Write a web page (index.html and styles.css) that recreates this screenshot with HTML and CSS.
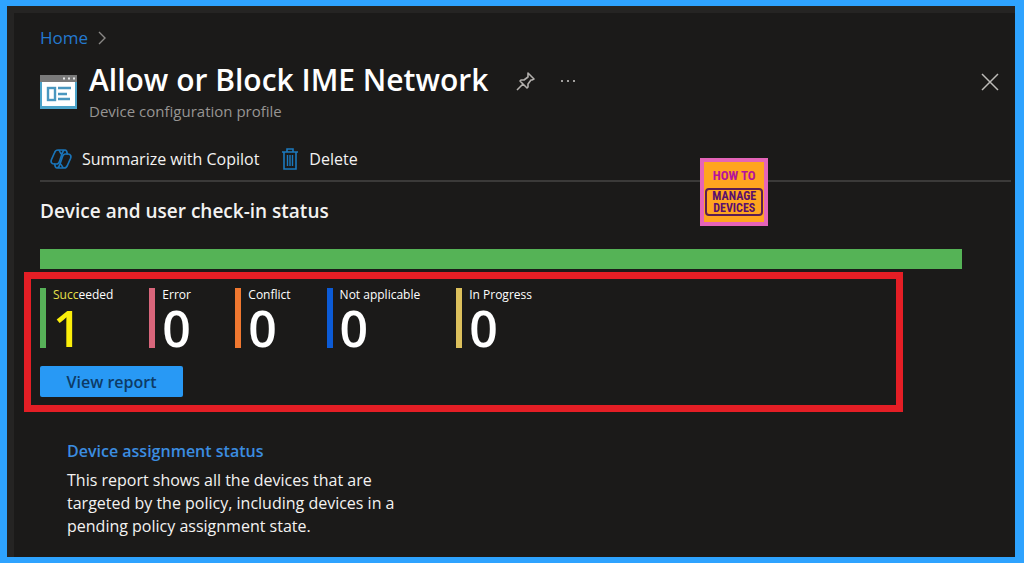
FILE: index.html
```html
<!DOCTYPE html>
<html lang="en">
<head>
  <meta charset="utf-8">
  <title>Allow or Block IME Network</title>
  <link rel="stylesheet" href="styles.css">
</head>
<body>
  <main class="blade">
    <nav class="breadcrumb">
      <a href="#">Home</a>
      <svg width="8" height="14" viewBox="0 0 8 14"><path d="M1 1l6 6-6 6" fill="none" stroke="#8a8886" stroke-width="1.4"/></svg>
    </nav>

    <header class="blade-header">
      <svg class="profile-icon" width="37" height="34" viewBox="0 0 37 34">
        <rect width="37" height="34" fill="#4ba3c9"/>
        <rect width="37" height="7" fill="#7a7a7a"/>
        <path d="M23 3.5h2M28 3.5h2M33 3.5h2" stroke="#e6e6e6" stroke-width="2"/>
        <rect x="2" y="7" width="33" height="24" fill="#fff"/>
        <rect x="8" y="13" width="7" height="12" fill="#fff" stroke="#4a97bf" stroke-width="2.4"/>
        <path d="M18 13h13M18 19h9M18 24h12" stroke="#4a97bf" stroke-width="2.4"/>
      </svg>
      <div class="title-block">
        <h1>Allow or Block IME Network</h1>
        <p>Device configuration profile</p>
      </div>
      <button class="icon-btn" type="button" aria-label="Pin">
        <svg width="20" height="20" viewBox="0 0 20 20" fill="none" stroke="#b3b0ad" stroke-width="1.6" stroke-linejoin="round"><path d="M12 2l6 6-2 1-1 0-3 4 0 3-1 1-7-7 1-1 3 0 4-3 0-2zM7 13l-6 6"/></svg>
      </button>
      <button class="icon-btn more" type="button" aria-label="More">
        <svg width="16" height="4" viewBox="0 0 16 4" fill="#a19f9d"><rect x="1" y="1" width="2" height="2"/><rect x="7" y="1" width="2" height="2"/><rect x="13" y="1" width="2" height="2"/></svg>
      </button>
      <button class="icon-btn close" type="button" aria-label="Close">
        <svg width="18" height="18" viewBox="0 0 18 18"><path d="M1 1l16 16M17 1L1 17" stroke="#bdbbb8" stroke-width="1.5"/></svg>
      </button>
    </header>

    <div class="toolbar">
      <button type="button">
        <svg width="22" height="20" viewBox="0 0 22 20" fill="none" stroke="#1a74b8" stroke-width="1.7" stroke-linecap="round" stroke-linejoin="round">
          <path d="M14 1H8C6 1 5 2 4.400 4L1.500 10.500C.5 13 1.500 15 4 15H6.500C8 15 9 14 9.500 12.500L12 5C12.500 3.500 13 1 15 1s2 2 2.300 4M8 1c2.500 0 1.500 4 4 4"/>
          <path d="M14 1H8C6 1 5 2 4.400 4L1.500 10.500C.5 13 1.500 15 4 15H6.500C8 15 9 14 9.500 12.500L12 5C12.500 3.500 13 1 15 1s2 2 2.300 4M8 1c2.500 0 1.500 4 4 4" transform="rotate(180 11 10)"/>
        </svg>
        Summarize with Copilot
      </button>
      <button type="button">
        <svg width="18" height="22" viewBox="0 0 18 22" fill="none" stroke="#1c79bd" stroke-width="1.6"><path d="M1 4h16M6 4V1h6v3M3 4v17h12V4"/><path d="M6.500 7v11M9 7v11M11.500 7v11" stroke-width="1.4"/></svg>
        Delete
      </button>
      <div class="logo"><span class="logo-top">HOW TO</span><span class="logo-box">MANAGE<br>DEVICES</span></div>
    </div>

    <h2>Device and user check-in status</h2>
    <div class="status-bar"></div>

    <section class="summary">
      <dl class="counts">
        <div class="count succeeded"><dt><span>Succ</span>eeded</dt><dd>1</dd></div>
        <div class="count error"><dt>Error</dt><dd>0</dd></div>
        <div class="count conflict"><dt>Conflict</dt><dd>0</dd></div>
        <div class="count not-applicable"><dt>Not applicable</dt><dd>0</dd></div>
        <div class="count in-progress"><dt>In Progress</dt><dd>0</dd></div>
      </dl>
      <button class="report-btn" type="button">View report</button>
    </section>

    <section class="report-card">
      <a href="#">Device assignment status</a>
      <p>This report shows all the devices that are targeted by the policy, including devices in a pending policy assignment state.</p>
    </section>
  </main>
</body>
</html>
```
FILE: styles.css
```css
* {
  box-sizing: border-box;
}

body {
  margin: 0;
  min-height: 100vh;
  display: flex;
  background: #2ea3ff;
  padding: 6px 9px 6px 7px;
  font-family: "Open Sans", "Noto Sans", sans-serif;
  font-size: 16px;
  color: #f3f2f1;
}

h1, h2, p, dl, dd {
  margin: 0;
}

a {
  text-decoration: none;
}

button {
  font: inherit;
  color: inherit;
  background: none;
  border: none;
  padding: 0;
  cursor: pointer;
}

svg {
  display: block;
  flex: none;
}

.blade {
  flex: 1;
  background: #1b1a19;
  border-top: 7px solid #252423;
  border-left: 7px solid #252423;
  padding: 12px 4px 12px 26px;
}

.breadcrumb {
  display: flex;
  align-items: center;
  gap: 10px;
  font-size: 17px;
  line-height: 25px;
}

.breadcrumb a {
  color: #2479cf;
}

.blade-header {
  display: flex;
  align-items: flex-start;
  margin-top: 10px;
}

.profile-icon {
  margin: 15px 12px 0 0;
}

.title-block h1 {
  font-size: 30px;
  font-weight: 600;
  line-height: 40px;
  color: #fff;
}

.title-block p {
  font-size: 15px;
  line-height: 22px;
  color: #979593;
}

.icon-btn {
  margin: 11px 0 0 28px;
}

.more {
  margin: 19px 0 0 24px;
}

.close {
  margin: 13px 12px 0 auto;
}

.toolbar {
  position: relative;
  display: flex;
  gap: 22px;
  height: 60px;
  padding: 22px 0 6px 10px;
  border-bottom: 2px solid #3b3a39;
}

.toolbar button {
  display: flex;
  align-items: center;
  gap: 10px;
}

/* sits over the toolbar rule */
.logo {
  position: absolute;
  top: 36px;
  left: 68%;
  width: 68px;
  height: 68px;
  padding: 5px 1px;
  border: 4px solid #e564b8;
  background: #ffa51f;
  font-family: "Roboto Condensed", Roboto, sans-serif;
  font-weight: bold;
  text-align: center;
  white-space: nowrap;
}

.logo-top {
  display: block;
  font-size: 13px;
  line-height: 18px;
  color: #b5129c;
}

.logo-box {
  display: block;
  margin-top: 3px;
  border: 2px solid #5b1d52;
  border-radius: 4px;
  font-size: 12px;
  line-height: 12px;
  color: #5a0f6e;
}

h2 {
  margin-top: 16px;
  font-size: 19px;
  font-weight: 600;
  line-height: 26px;
}

.status-bar {
  height: 20px;
  margin: 25px 49px 0 0;
  background: #55b356;
}

.summary {
  margin: 3px 108px 0 -16px;
  padding: 9px 9px 8px;
  border: 7px solid #e41e25;
}

.counts {
  display: flex;
  gap: 36px;
}

.count {
  min-width: 50px;
  height: 60px;
  border-left: 6px solid;
  padding-left: 7px;
  white-space: nowrap;
}

.count dt {
  font-size: 12px;
  line-height: 14px;
  color: #fff;
}

.count dt span {
  color: #e6e04a;
}

.count dd {
  font-size: 50px;
  font-weight: 600;
  line-height: 52px;
  color: #fff;
}

.succeeded {
  border-color: #57b158;
}

.succeeded dd {
  color: #fbee0a;
}

.error {
  border-color: #d9667b;
}

.conflict {
  border-color: #f07830;
}

.not-applicable {
  border-color: #0c5bd6;
}

.in-progress {
  border-color: #dcc05c;
}

.report-btn {
  width: 143px;
  height: 31px;
  margin-top: 18px;
  border-radius: 2px;
  background: #2899f5;
  color: #0d3b66;
  font-weight: 600;
}

.report-card {
  max-width: 370px;
  margin-top: 28px;
  padding-left: 27px;
  line-height: 23px;
}

.report-card a {
  font-weight: 600;
  color: #3b8de0;
}

.report-card p {
  margin-top: 6px;
}
```
